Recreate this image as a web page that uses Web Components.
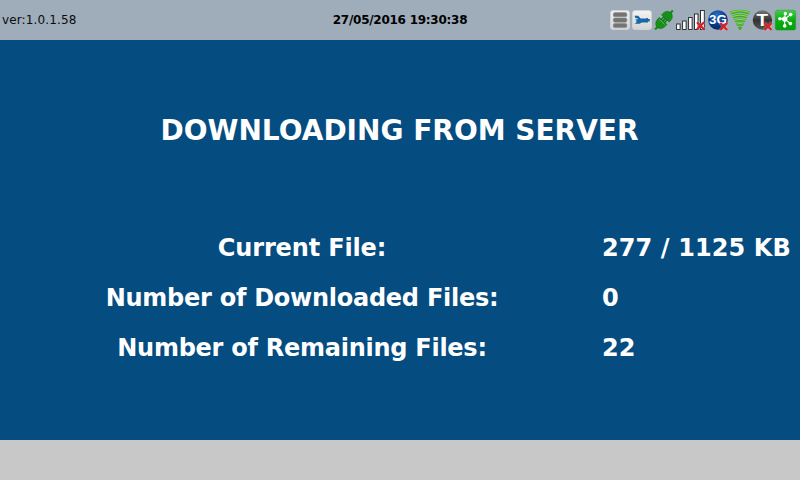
<!DOCTYPE html>
<html lang="en">
<head>
<meta charset="utf-8">
<title>Downloading</title>
<style>
html,body{margin:0;height:100%;overflow:hidden}
body{font-family:"DejaVu Sans",sans-serif}
</style>
</head>
<body>
<download-screen></download-screen>
<script>
const define = (name, html) => customElements.define(name, class extends HTMLElement {
  constructor() {
    super();
    this.attachShadow({mode: 'open'}).innerHTML = html;
  }
});

const cross = (x, y) => `<path d="M${x} ${y}l7 7m0-7l-7 7" stroke="#fff" stroke-opacity=".3" stroke-width="3.4"/><path d="M${x} ${y}l7 7m0-7l-7 7" stroke="#dd1c24" stroke-width="2.3"/>`;
const tile = `<defs><linearGradient id="t" x2="0" y2="1"><stop stop-color="#f4f4f4"/><stop offset="1" stop-color="#d2d3d4"/></linearGradient></defs><rect x=".5" y=".5" width="19" height="19" rx="2.5" fill="url(#t)" stroke="#d0d1d2"/>`;
const icons = {
  database: [20, tile + `<g fill="#747474" stroke="#8c8c8c" stroke-width=".6"><rect x="3.3" y="2.6" width="13.6" height="4.2" rx="1.6"/><rect x="3.3" y="8" width="13.6" height="4.2" rx="1.6"/><rect x="3.3" y="13.4" width="13.6" height="4.2" rx="1.6"/></g>`],
  connector: [20, tile + `<path d="M2.4 5.8H6.2L8.6 8.6H14.4V8H16V9H17.8V11.4H16V12.4H9.8L7.6 13.8H2.6L4.4 12.2V10.6L2.8 9.6H5.6V8.2H3.6Z" fill="#1768a8"/>`],
  plug: [20, `<g transform="rotate(-47 10 10)"><path d="M-3 10H23" stroke="#108716" stroke-width="2"/><path d="M8.7 4.8V15.2H6.5C3 15.2 .4 13 .1 10.5V9.5C.4 7 3 4.8 6.5 4.8ZM12 4.8H14C17.3 4.8 19.6 7 19.9 9.5V10.5C19.6 13 17.3 15.2 14 15.2H12Z" fill="#169019" stroke="#0a7d10" stroke-width=".7"/><path d="M8 7.7H12.3M8 12.3H12.3" stroke="#0d7912" stroke-width="1.4"/><path d="M7.3 6.5V13.5" stroke="#65b966" stroke-width=".9"/></g>`],
  signal: [29, `<g fill="#fff" stroke="#202225" stroke-width=".9"><rect x=".6" y="14" width="3.5" height="5.5"/><rect x="6.6" y="11" width="3.5" height="8.5"/><rect x="12.6" y="7.5" width="3.5" height="12"/><rect x="18.5" y="4" width="3.5" height="15.5"/><rect x="24.5" y=".5" width="3.8" height="19"/></g>` + cross(21, 12.2)],
  mobile: [20, `<defs><radialGradient id="b" cx=".45" cy=".25" r=".8"><stop stop-color="#2d6fc5"/><stop offset=".55" stop-color="#073d91"/><stop offset="1" stop-color="#03235f"/></radialGradient></defs><circle cx="10" cy="10" r="9.8" fill="url(#b)"/><text x="1" y="14.3" font-family="Liberation Sans" font-size="12.5" font-weight="700" fill="#fff" textLength="17.8" lengthAdjust="spacingAndGlyphs">3G</text>` + cross(12.2, 13)],
  wifi: [20, `<g fill="none" stroke="#3fae1b" stroke-width="3.1"><path d="M.6 3Q10-.6 19.4 3M2.8 7Q10 4.3 17.2 7M4.7 10.9Q10 9 15.3 10.9M6.5 14.6Q10 13.3 13.5 14.6"/></g><path d="M7.9 17Q10 16.2 12.1 17L10.6 20H9.4Z" fill="#3fae1b"/><path d="M.9 2.5Q10-1 19.1 2.5M3.1 6.5Q10 3.9 16.9 6.5M5 10.4Q10 8.6 15 10.4M6.8 14.1Q10 12.9 13.2 14.1" fill="none" stroke="#86dd55" stroke-width="1.1"/>`],
  tracker: [20, `<defs><linearGradient id="g" x2="0" y2="1"><stop stop-color="#777"/><stop offset=".5" stop-color="#333"/><stop offset="1" stop-color="#555"/></linearGradient></defs><circle cx="10.4" cy="10" r="9.7" fill="url(#g)"/><text x="4.4" y="15.8" font-family="Liberation Sans" font-size="16.5" font-weight="700" fill="#fff" textLength="11.5" lengthAdjust="spacingAndGlyphs">T</text>` + cross(12.5, 13)],
  network: [21, `<defs><linearGradient id="n" x2="0" y2="1"><stop stop-color="#46c94a"/><stop offset=".5" stop-color="#08ad12"/><stop offset="1" stop-color="#00a20b"/></linearGradient></defs><rect x=".3" y=".2" width="20.4" height="19.9" rx="2.2" fill="url(#n)" stroke="#169b1d" stroke-width=".4"/><path d="M9.6 9L5 8.7M9.6 9L10.4 3.4M9.6 9L15.6 4.6M9.6 9L9.7 15.8M9.6 9L15.2 13.4" stroke="#fff" stroke-width="1.1"/><g fill="#fff"><circle cx="9.7" cy="9.1" r="2.7"/><circle cx="4.9" cy="8.7" r="1.8"/><circle cx="10.4" cy="3.5" r="1.7"/><circle cx="15.7" cy="4.6" r="1.8"/><circle cx="9.7" cy="15.9" r="1.8"/><circle cx="15.4" cy="13.6" r="1.8"/></g>`]
};

customElements.define('status-icon', class extends HTMLElement {
  connectedCallback() {
    const [w, art] = icons[this.getAttribute('name')];
    this.attachShadow({mode: 'open'}).innerHTML = `<style>:host{display:block;flex:none}:host([name=mobile]),:host([name=network]){margin-left:1px}svg{display:block;overflow:visible}</style><svg width="${w}" height="20" viewBox="0 0 ${w} 20">${art}</svg>`;
  }
});

define('status-bar', `<style>
:host{display:grid;grid-template-columns:1fr auto 1fr;align-items:center;height:40px;box-sizing:border-box;background:#9facb9;color:#000;font-size:12px;line-height:14px;padding:0 4px 0 2px}
.version{color:#090c0e;letter-spacing:.13px}
.time{font-weight:700;padding-left:2px;letter-spacing:-.26px}
.icons{display:flex;justify-content:flex-end;gap:2px}
</style><div class="version"><slot name="version"></slot></div><div class="time"><slot name="time"></slot></div><div class="icons"><slot></slot></div>`);

define('info-row', `<style>
:host{display:grid;grid-template-columns:604px 1fr;height:50px;align-items:center;font-size:24px;line-height:28px;font-weight:700;white-space:nowrap}
.label{text-align:center;letter-spacing:-.26px}
:host([short]) .label{letter-spacing:-.15px}
.value{margin-left:-2px;letter-spacing:.1px}
</style><div class="label"><slot name="label"></slot></div><div class="value"><slot></slot></div>`);

define('download-panel', `<style>
:host{display:block;flex:1;background:#054c80;color:#fff}
h1{margin:0;padding:74px 1px 76px 0;text-align:center;font-size:28px;line-height:33px;font-weight:700}
</style><h1><slot name="title"></slot></h1><slot></slot>`);

define('bottom-bar', `<style>:host{display:block;height:40px;background:#c8c8c8}</style>`);

define('download-screen', `<style>:host{display:flex;flex-direction:column;width:800px;height:480px}</style>
<status-bar>
<span slot="version">ver:1.0.1.58</span><span slot="time">27/05/2016 19:30:38</span>
<status-icon name="database"></status-icon><status-icon name="connector"></status-icon><status-icon name="plug"></status-icon><status-icon name="signal"></status-icon><status-icon name="mobile"></status-icon><status-icon name="wifi"></status-icon><status-icon name="tracker"></status-icon><status-icon name="network"></status-icon>
</status-bar>
<download-panel>
<span slot="title">DOWNLOADING FROM SERVER</span>
<info-row short><span slot="label">Current File:</span>277 / 1125 KB</info-row>
<info-row><span slot="label">Number of Downloaded Files:</span>0</info-row>
<info-row><span slot="label">Number of Remaining Files:</span>22</info-row>
</download-panel>
<bottom-bar></bottom-bar>`);
</script>
</body>
</html>
